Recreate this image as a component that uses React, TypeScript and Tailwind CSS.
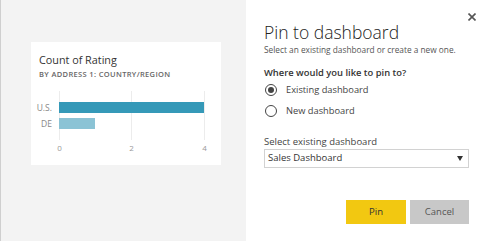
import React, { useState } from 'react';

const font = { fontFamily: '"Open Sans", "Noto Sans", Arial, sans-serif' };

function RatingChart() {
  return (
    <svg width="190" height="70" viewBox="0 0 190 70" className="block">
      {[28, 100, 173].map(x => (
        <line key={x} x1={x + 0.5} x2={x + 0.5} y1={5} y2={54} stroke="#ececec" strokeWidth="1" />
      ))}
      <rect x="28" y="16" width="145" height="11" fill="#3599b8" />
      <rect x="28" y="32" width="36" height="11" fill="#8bc3d5" />
      <text x="21" y="25" textAnchor="end" fontSize="8.5" fill="#888">U.S.</text>
      <text x="21" y="41" textAnchor="end" fontSize="8.5" fill="#888">DE</text>
      {[
        [28, '0'],
        [100, '2'],
        [173, '4'],
      ].map(([x, t]) => (
        <text key={t} x={Number(x) + 0.5} y="65" textAnchor="middle" fontSize="8" fill="#999">
          {t}
        </text>
      ))}
    </svg>
  );
}

function Radio({ checked }: { checked: boolean }) {
  return (
    <span className="w-[12px] h-[12px] rounded-full border border-[#444] flex items-center justify-center">
      {checked && <span className="w-[6px] h-[6px] rounded-full bg-[#444]" />}
    </span>
  );
}

export default function App() {
  const [choice, setChoice] = useState<'existing' | 'new'>('existing');

  return (
    <div className="flex w-[487px] h-[241px] overflow-hidden" style={font}>
      {/* Tile preview */}
      <div className="w-[246px] h-full bg-[#f3f3f3] border-l border-[#cfcfcf] pl-[30px] pt-[42px]">
        <div className="w-[190px] h-[123px] bg-white">
          <div className="pl-[8px] pt-[9px]">
            <div className="text-[10.8px] leading-[18px] text-[#333]">Count of Rating</div>
            <div className="text-[7.5px] leading-[10px] tracking-[0.35px] text-[#666] font-semibold uppercase whitespace-nowrap">
              By Address 1: Country/Region
            </div>
          </div>
          <div className="mt-[7px]">
            <RatingChart />
          </div>
        </div>
      </div>

      {/* Dialog */}
      <div className="relative flex-1 bg-white px-[18px] pt-[20px] text-[#333]">
        <button className="absolute right-[11px] top-[13px] w-[8px] h-[8px]" aria-label="Close">
          <svg width="8" height="8" viewBox="0 0 8 8" className="block">
            <path d="M0.5 0.5 L7.5 7.5 M7.5 0.5 L0.5 7.5" stroke="#555" strokeWidth="1.6" />
          </svg>
        </button>

        <div className="text-[17.5px] leading-[24px] font-light text-[#222] whitespace-nowrap">Pin to dashboard</div>
        <div className="text-[8.3px] leading-[12px] text-[#555] whitespace-nowrap">
          Select an existing dashboard or create a new one.
        </div>

        <div className="mt-[10px] text-[9.4px] leading-[14px] font-semibold text-[#333] whitespace-nowrap">
          Where would you like to pin to?
        </div>
        <div className="flex flex-col gap-[1px] pl-[1px]">
          <label className="h-[20px] flex items-center gap-[9px] text-[9.3px] text-[#444]" onClick={() => setChoice('existing')}>
            <Radio checked={choice === 'existing'} />
            Existing dashboard
          </label>
          <label className="h-[20px] flex items-center gap-[9px] text-[9.3px] text-[#444]" onClick={() => setChoice('new')}>
            <Radio checked={choice === 'new'} />
            New dashboard
          </label>
        </div>

        <div className="mt-[15px] text-[9.5px] leading-[12px] text-[#444]">Select existing dashboard</div>
        <div className="mt-[1px] h-[19px] border border-[#d2d2d2] flex items-center justify-between pl-[3px] pr-[5px]">
          <span className="text-[9.5px] text-[#333]">Sales Dashboard</span>
          <svg width="6" height="5" viewBox="0 0 6 5" className="block">
            <path d="M0 0 H6 L3 5 Z" fill="#333" />
          </svg>
        </div>

        <div className="mt-[32px] flex justify-end gap-[4px]">
          <button className="w-[60px] h-[24px] bg-[#f2c811] text-[9.5px] text-[#333]">Pin</button>
          <button className="w-[59px] h-[24px] bg-[#c8c8c8] text-[9.5px] text-[#555]">Cancel</button>
        </div>
      </div>
    </div>
  );
}
